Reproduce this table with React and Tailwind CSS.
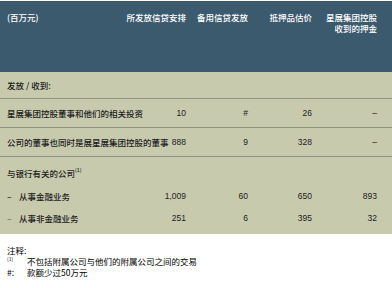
import React from 'react'

const CJK = { fontFamily: '"Noto Sans CJK SC", "Liberation Sans", sans-serif' }

const ROWS = [
  { label: '星展集团控股董事和他们的相关投资', v: ['10', '#', '26', '–'] },
  { label: '公司的董事也同时是展星展集团控股的董事', v: ['888', '9', '328', '–'] },
]

function Num({ children, className = '' }) {
  return (
    <span className={`font-['Liberation_Sans',sans-serif] text-right ${className}`}>{children}</span>
  )
}

function DataRow({ label, v, dash, faint, className = '' }) {
  return (
    <div className={`grid grid-cols-[179px_62px_64px_65px] items-center ${className}`}>
      <div className="flex items-center justify-between">
        <span className="flex items-center">
          {dash && <span className={`w-[12px] ${faint ? 'text-[#6b6e5c]' : ''}`}>–</span>}
          {label}
        </span>
        <Num>{v[0]}</Num>
      </div>
      <Num>{v[1]}</Num>
      <Num>{v[2]}</Num>
      <Num>{v[3]}</Num>
    </div>
  )
}

export default function App() {
  return (
    <div className="w-[392px] h-[288px] bg-white text-[8.5px] leading-[10px] text-[#1c1c1c] overflow-hidden" style={CJK}>
      <div className="h-[1px] bg-white" />
      {/* Header */}
      <div className="h-[71px] bg-[#3c5a6e] text-white font-medium pl-[7px] pr-[15px] pt-[11px] leading-[11px]">
        <div className="grid grid-cols-[179px_62px_64px_65px]">
          <div className="flex justify-between">
            <span>(百万元)</span>
            <span>所发放信贷安排</span>
          </div>
          <span className="text-right">备用信贷发放</span>
          <span className="text-right">抵押品估价</span>
          <span className="text-right">星展集团控股<br />收到的押金</span>
        </div>
      </div>

      {/* Body */}
      <div className="bg-[#c8caae] pl-[7px] pr-[15px] font-medium">
        <div className="h-[26px] flex items-center">发放 / 收到:</div>
        {ROWS.map((r) => (
          <div key={r.label} className="border-t border-[#8f9480] h-[29px] flex flex-col justify-center -ml-[7px] -mr-[15px] pl-[7px] pr-[15px]">
            <DataRow label={r.label} v={r.v} />
          </div>
        ))}
        <div className="border-t border-[#8f9480] -ml-[7px] -mr-[15px] pl-[7px] pr-[15px] pt-[11px] pb-[11px]">
          <div className="flex items-start">
            与银行有关的公司<sup className="text-[5px] leading-none mt-[1px]">(1)</sup>
          </div>
          <DataRow className="mt-[13px]" label="从事金融业务" v={['1,009', '60', '650', '893']} dash />
          <DataRow className="mt-[12px]" label="从事非金融业务" v={['251', '6', '395', '32']} dash faint />
        </div>
      </div>

      {/* Notes */}
      <div className="pl-[7px] pt-[11px] leading-[11px] text-black">
        <div>注释:</div>
        <div className="flex items-start">
          <span className="w-[20px] text-[5px] leading-[6px]">(1)</span>
          <span>不包括附属公司与他们的附属公司之间的交易</span>
        </div>
        <div className="flex">
          <span className="w-[20px]">#:</span>
          <span>款额少过50万元</span>
        </div>
      </div>
    </div>
  )
}
